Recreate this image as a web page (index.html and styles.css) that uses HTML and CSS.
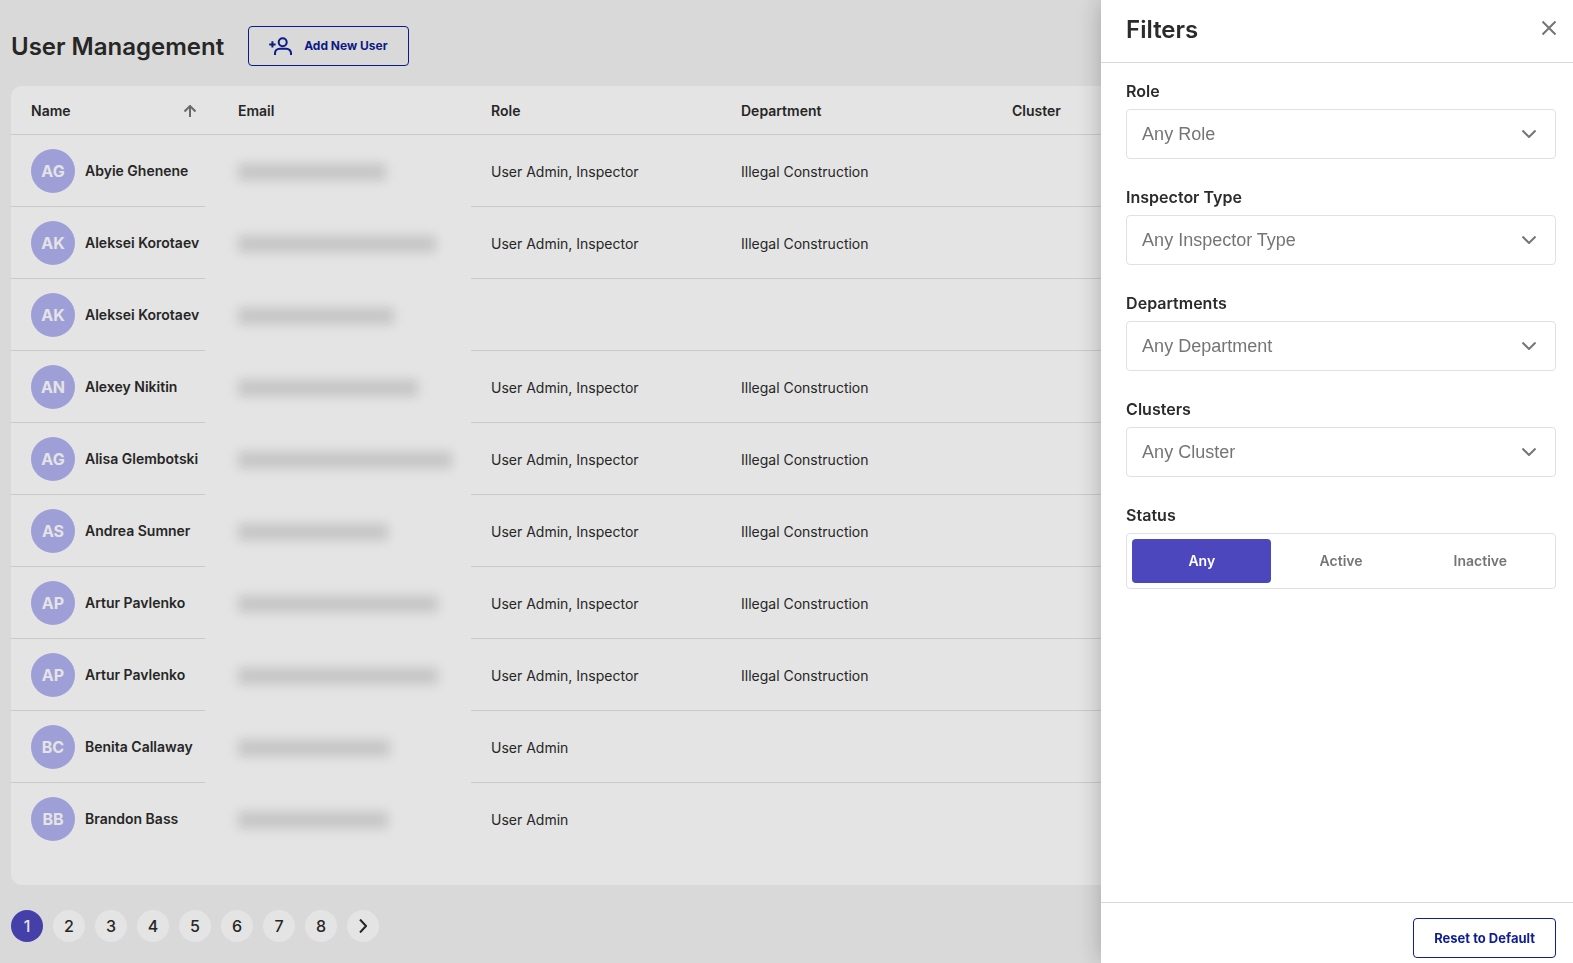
FILE: index.html
```html
<!DOCTYPE html>
<html lang="en">
<head>
<meta charset="utf-8">
<meta name="viewport" content="width=device-width, initial-scale=1">
<title>User Management</title>
<link rel="stylesheet" href="styles.css">
</head>
<body>
<main class="page">
  <header class="page-header">
    <h1 class="page-title">User Management</h1>
    <button type="button" class="outline-button compact">
      <svg class="add-user-icon" viewBox="0 0 24 20" aria-hidden="true"><circle cx="13.700" cy="6.200" r="4"/><path d="M6 19v-1.700a4.600 4.600 0 0 1 4.600-4.600h6.800a4.600 4.600 0 0 1 4.600 4.600V19M.2 8.400h6.400M3.400 5.200v6.400"/></svg>
      Add New User
    </button>
  </header>
  <section class="card">
    <table class="users">
      <colgroup><col class="col-name"><col class="col-email"><col class="col-role"><col class="col-department"><col></colgroup>
      <thead>
        <tr>
          <th scope="col"><span class="sort-heading">Name <svg class="sort-icon" viewBox="0 0 12 12" aria-hidden="true"><path d="M6 12V1M.5 6.500 6 1l5.500 5.500"/></svg></span></th>
          <th scope="col" class="email-cell">Email</th>
          <th scope="col">Role</th>
          <th scope="col">Department</th>
          <th scope="col">Cluster</th>
        </tr>
      </thead>
      <tbody>
        <tr><td><span class="user"><span class="avatar">AG</span>Abyie Ghenene</span></td><td class="email-cell"><span class="redacted" style="width:148px"></span></td><td>User Admin, Inspector</td><td>Illegal Construction</td><td></td></tr>
        <tr><td><span class="user"><span class="avatar">AK</span>Aleksei Korotaev</span></td><td class="email-cell"><span class="redacted" style="width:198px"></span></td><td>User Admin, Inspector</td><td>Illegal Construction</td><td></td></tr>
        <tr><td><span class="user"><span class="avatar">AK</span>Aleksei Korotaev</span></td><td class="email-cell"><span class="redacted" style="width:156px"></span></td><td></td><td></td><td></td></tr>
        <tr><td><span class="user"><span class="avatar">AN</span>Alexey Nikitin</span></td><td class="email-cell"><span class="redacted" style="width:180px"></span></td><td>User Admin, Inspector</td><td>Illegal Construction</td><td></td></tr>
        <tr><td><span class="user"><span class="avatar">AG</span>Alisa Glembotski</span></td><td class="email-cell"><span class="redacted" style="width:214px"></span></td><td>User Admin, Inspector</td><td>Illegal Construction</td><td></td></tr>
        <tr><td><span class="user"><span class="avatar">AS</span>Andrea Sumner</span></td><td class="email-cell"><span class="redacted" style="width:150px"></span></td><td>User Admin, Inspector</td><td>Illegal Construction</td><td></td></tr>
        <tr><td><span class="user"><span class="avatar">AP</span>Artur Pavlenko</span></td><td class="email-cell"><span class="redacted" style="width:200px"></span></td><td>User Admin, Inspector</td><td>Illegal Construction</td><td></td></tr>
        <tr><td><span class="user"><span class="avatar">AP</span>Artur Pavlenko</span></td><td class="email-cell"><span class="redacted" style="width:200px"></span></td><td>User Admin, Inspector</td><td>Illegal Construction</td><td></td></tr>
        <tr><td><span class="user"><span class="avatar">BC</span>Benita Callaway</span></td><td class="email-cell"><span class="redacted" style="width:152px"></span></td><td>User Admin</td><td></td><td></td></tr>
        <tr><td><span class="user"><span class="avatar">BB</span>Brandon Bass</span></td><td class="email-cell"><span class="redacted" style="width:150px"></span></td><td>User Admin</td><td></td><td></td></tr>
      </tbody>
    </table>
  </section>
  <nav class="pagination" aria-label="Pages">
    <button type="button" class="page-button current" aria-current="page">1</button>
    <button type="button" class="page-button">2</button>
    <button type="button" class="page-button">3</button>
    <button type="button" class="page-button">4</button>
    <button type="button" class="page-button">5</button>
    <button type="button" class="page-button">6</button>
    <button type="button" class="page-button">7</button>
    <button type="button" class="page-button">8</button>
    <button type="button" class="page-button" aria-label="Next page"><svg class="next-icon" viewBox="0 0 8 14" aria-hidden="true"><path d="m1 .5 6 6.500-6 6.500"/></svg></button>
  </nav>
</main>
<div class="backdrop"></div>
<aside class="drawer" aria-labelledby="drawer-title">
  <header class="drawer-header">
    <h2 class="drawer-title" id="drawer-title">Filters</h2>
    <button type="button" class="close-button" aria-label="Close"><svg class="close-icon" viewBox="0 0 16 16" aria-hidden="true"><path d="m1.500 1.500 13 13M14.500 1.500l-13 13"/></svg></button>
  </header>
  <form class="filters" id="filters">
    <div class="field">
      <label class="field-label" for="role">Role</label>
      <div class="select-box"><select id="role"><option>Any Role</option></select><svg class="chevron" viewBox="0 0 14 8" aria-hidden="true"><path d="m.5.500 6.500 6.500 6.500-6.500"/></svg></div>
    </div>
    <div class="field">
      <label class="field-label" for="inspector">Inspector Type</label>
      <div class="select-box"><select id="inspector"><option>Any Inspector Type</option></select><svg class="chevron" viewBox="0 0 14 8" aria-hidden="true"><path d="m.5.500 6.500 6.500 6.500-6.500"/></svg></div>
    </div>
    <div class="field">
      <label class="field-label" for="departments">Departments</label>
      <div class="select-box"><select id="departments"><option>Any Department</option></select><svg class="chevron" viewBox="0 0 14 8" aria-hidden="true"><path d="m.5.500 6.500 6.500 6.500-6.500"/></svg></div>
    </div>
    <div class="field">
      <label class="field-label" for="clusters">Clusters</label>
      <div class="select-box"><select id="clusters"><option>Any Cluster</option></select><svg class="chevron" viewBox="0 0 14 8" aria-hidden="true"><path d="m.5.500 6.500 6.500 6.500-6.500"/></svg></div>
    </div>
    <div class="field" role="radiogroup" aria-labelledby="status-label">
      <span class="field-label" id="status-label">Status</span>
      <div class="segments">
        <label class="segment"><input type="radio" name="status" checked>Any</label>
        <label class="segment"><input type="radio" name="status">Active</label>
        <label class="segment"><input type="radio" name="status">Inactive</label>
      </div>
    </div>
  </form>
  <footer class="drawer-footer">
    <button type="reset" form="filters" class="outline-button">Reset to Default</button>
  </footer>
</aside>
</body>
</html>
```
FILE: styles.css
```css
:root {
  --ink: #2b2b2b;
  --accent: #4d47be;
  --navy: #0f1f93;
  --muted: #757575;
  --line: #e1e1e1;
}

* { box-sizing: border-box; }

body {
  margin: 0;
  min-height: 100vh;
  background: #f2f2f2;
  color: var(--ink);
  font: 14px/20px Inter, "Liberation Sans", sans-serif;
}

h1, h2 { margin: 0; padding-top: 2px; font-size: 24px; line-height: 32px; font-weight: 600; }

button { font-family: inherit; cursor: pointer; }

svg { fill: none; stroke: currentColor; flex: none; }

.page { padding: 26px 11px 20px; }

.page-header { display: flex; align-items: center; gap: 24px; margin-bottom: 20px; }

.outline-button {
  display: inline-flex;
  align-items: center;
  justify-content: center;
  gap: 11px;
  height: 40px;
  padding: 0 20px;
  border: 1px solid var(--navy);
  border-radius: 4px;
  background: transparent;
  color: var(--navy);
  font-size: 13px;
  line-height: 16px;
  font-weight: 700;
}
.outline-button.compact { font-size: 12px; }

.add-user-icon { width: 24px; height: 20px; stroke-width: 2; }

.card { padding-bottom: 30px; border-radius: 11px; background: #fefefe; }

.users { width: 100%; border-collapse: separate; border-spacing: 0; table-layout: fixed; }
.col-name { width: 194px; }
.col-email { width: 266px; }
.col-role { width: 250px; }
.col-department { width: 271px; }

.users th, .users td { padding: 2px 0 0 20px; border-bottom: 1px solid var(--line); text-align: left; white-space: nowrap; }
.users th { height: 49px; font-weight: 600; }
.users td { height: 72px; }
.users td:first-child { padding-top: 0; }
.users .email-cell { padding-left: 33px; }
.users td.email-cell, .users tr:last-child td { border-bottom-color: transparent; }

.sort-heading { display: flex; align-items: center; justify-content: space-between; padding-right: 9px; }
.sort-icon { width: 12px; height: 12px; color: var(--muted); stroke-width: 2; }

.user { display: flex; align-items: center; gap: 10px; font-weight: 600; }
.avatar {
  display: grid;
  place-items: center;
  width: 44px;
  height: 44px;
  border-radius: 50%;
  background: #b2b1f1;
  color: #fefefe;
  font-size: 16px;
  font-weight: 700;
}

.redacted { display: block; height: 16px; border-radius: 4px; background: #dadada; filter: blur(6px); }

.pagination { display: flex; gap: 10px; margin-top: 25px; }
.page-button {
  display: grid;
  place-items: center;
  width: 32px;
  height: 32px;
  padding: 0;
  border: 0;
  border-radius: 50%;
  background: #fefefe;
  color: var(--ink);
  font-size: 16px;
  font-weight: 500;
}
.page-button.current { background: var(--accent); color: #fefefe; }
.next-icon { width: 8px; height: 14px; stroke-width: 2; }

.backdrop { position: fixed; inset: 0; background: rgba(0, 0, 0, 0.1); }

.drawer {
  position: fixed;
  inset: 0 0 0 auto;
  display: flex;
  flex-direction: column;
  width: 30%;
  background: #fff;
  box-shadow: 0 0 24px rgba(0, 0, 0, 0.25);
}

.drawer-header {
  display: flex;
  align-items: flex-start;
  justify-content: space-between;
  padding: 12px 16px 16px 25px;
  border-bottom: 1px solid #d8d8d8;
}
.close-button { display: flex; padding: 8px 0; border: 0; background: none; color: var(--muted); }
.close-icon { width: 16px; height: 16px; stroke-width: 2; }

.filters { display: flex; flex: 1; flex-direction: column; gap: 28px; padding: 18px 17px 18px 25px; }
.field { display: flex; flex-direction: column; gap: 8px; }
.field-label { font-size: 16px; line-height: 20px; font-weight: 600; }

.select-box { position: relative; }
.select-box select {
  width: 100%;
  height: 50px;
  padding: 0 48px 0 15px;
  border: 1px solid var(--line);
  border-radius: 4px;
  appearance: none;
  background: #fff;
  color: var(--muted);
  font: 18px/24px "Liberation Sans", Arial, sans-serif;
}
.chevron {
  position: absolute;
  top: 21px;
  right: 20px;
  width: 14px;
  height: 8px;
  color: var(--muted);
  stroke-width: 2;
  pointer-events: none;
}

.segments {
  display: grid;
  grid-template-columns: repeat(3, 1fr);
  padding: 5px;
  border: 1px solid var(--line);
  border-radius: 4px;
}
.segment {
  display: grid;
  place-items: center;
  height: 44px;
  border-radius: 4px;
  color: var(--muted);
  font-weight: 600;
  cursor: pointer;
}
.segment input { position: absolute; margin: 0; appearance: none; }
.segment:has(input:checked) { background: var(--accent); color: #fff; }

.drawer-footer {
  display: flex;
  justify-content: flex-end;
  padding: 15px 17px 5px 25px;
  border-top: 1px solid #d8d8d8;
}
```
